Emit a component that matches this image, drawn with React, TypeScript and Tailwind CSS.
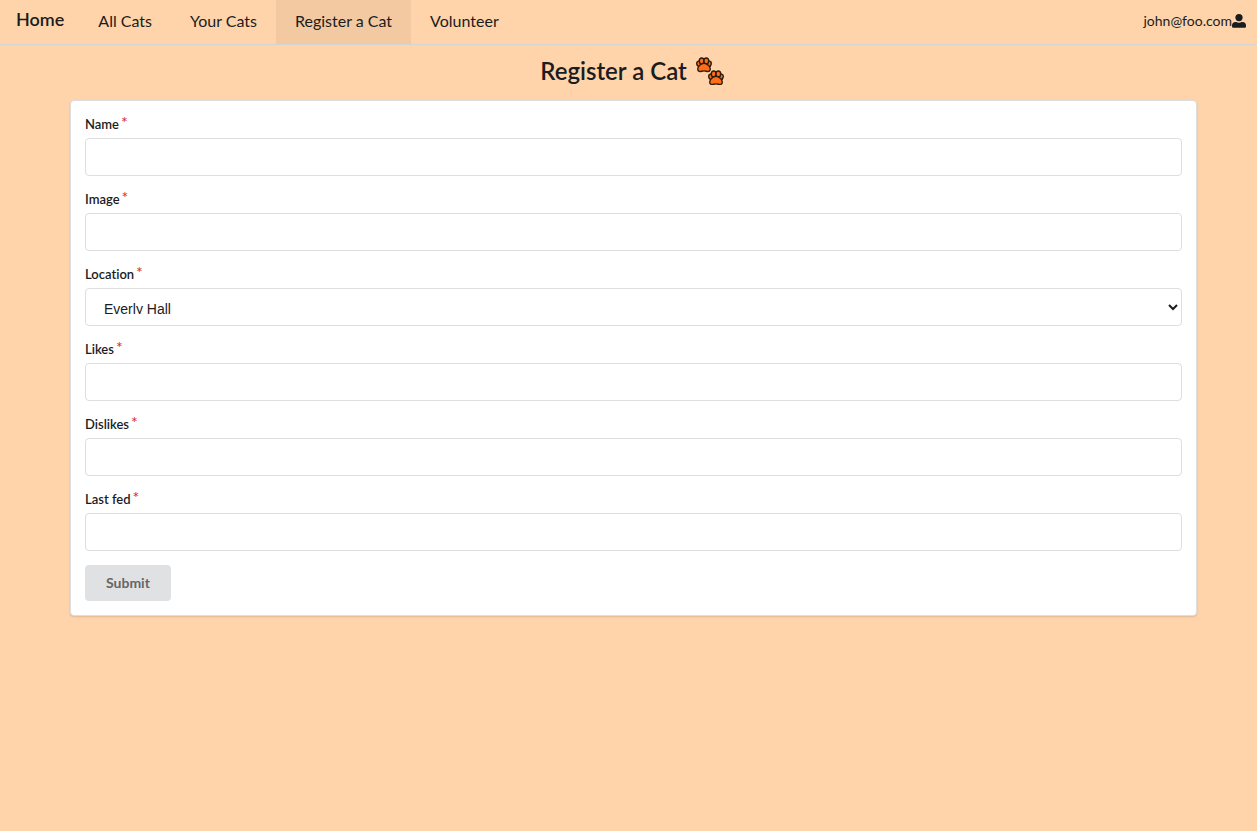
import { useState } from 'react';

const links = ['All Cats', 'Your Cats', 'Register a Cat', 'Volunteer'];

function UserIcon() {
  return (
    <svg viewBox="0 0 14 14" className="size-[14px]" fill="currentColor" aria-hidden="true">
      <circle cx="7" cy="3.6" r="3.6" />
      <path d="M0 12.6v-1A3.6 3.6 0 0 1 3.6 8h.6a5.5 5.5 0 0 0 5.6 0h.6A3.6 3.6 0 0 1 14 11.6v1A1.2 1.2 0 0 1 12.8 13.8H1.2A1.2 1.2 0 0 1 0 12.6Z" />
    </svg>
  );
}

function Paw({ x, y }: { x: number; y: number }) {
  return (
    <g transform={`translate(${x} ${y})`} stroke="#2b1d10" strokeWidth="1.4" fill="#ff6d16" strokeLinejoin="round">
      <ellipse cx="2.9" cy="6.8" rx="2.1" ry="2.8" transform="rotate(-12 2.9 6.8)" />
      <ellipse cx="13.1" cy="6.8" rx="2.1" ry="2.8" transform="rotate(12 13.1 6.8)" />
      <ellipse cx="5.7" cy="4" rx="2.4" ry="3" />
      <ellipse cx="10.3" cy="4" rx="2.4" ry="3" />
      <path d="M8 6.2C5.6 6.2 4.6 7.4 3.4 8.6 1.5 10.6 1.2 13.2 2.7 14.2c1.5.9 3.3-.3 5.300-.3s3.800 1.200 5.300.3c1.500-1 1.200-3.600-.7-5.600C11.400 7.400 10.400 6.200 8 6.200Z" />
    </g>
  );
}

function PawsIcon() {
  return (
    <svg viewBox="0 0 28 28" className="size-7" aria-hidden="true">
      <Paw x={0} y={0} />
      <Paw x={12} y={13} />
    </svg>
  );
}

function Label({ id, children }: { id: string; children: string }) {
  return (
    <label htmlFor={id} className="mb-[5px] block text-[13px] leading-[18px] font-semibold">
      {children}
      <span className="relative -top-px ml-[2px] text-base leading-none font-normal text-[#db2828]">*</span>
    </label>
  );
}

const box = 'block h-[38px] w-full rounded border border-[#dedede] bg-white px-[14px] text-sm outline-none focus:border-[#85b7d9]';

function TextField({ id, label }: { id: string; label: string }) {
  return (
    <div>
      <Label id={id}>{label}</Label>
      <input id={id} type="text" className={box} />
    </div>
  );
}

export default function App() {
  const [hall, setHall] = useState('Everly Hall');
  return (
    <div className="min-h-screen bg-[#ffd4aa] font-['Lato',sans-serif] text-[#1b1c1d] [font-variant-ligatures:none]">
      <nav className="flex h-[45px] items-stretch border-b border-[#d4d4d5] text-base">
        <a href="#home" className="flex items-center pr-[15px] pb-[6px] pl-4 text-lg font-semibold">Home</a>
        {links.map((link) => (
          <a
            key={link}
            href={'#' + link.toLowerCase().replaceAll(' ', '-')}
            aria-current={link === 'Register a Cat' ? 'page' : undefined}
            className="flex items-center px-[19px] pb-[2px] aria-[current=page]:bg-[#f2c9a1]"
          >
            {link}
          </a>
        ))}
        <a href="#account" className="ml-auto flex items-center pr-[11px] pb-[2px] text-sm">
          john@foo.com
          <UserIcon />
        </a>
      </nav>
      <main className="pl-[10px]">
        <div className="mx-auto max-w-[1127px]">
          <h1 className="flex h-[55px] items-center justify-center gap-[9px] pr-[3px] pb-[3px] text-2xl font-semibold">
            Register a Cat
            <PawsIcon />
          </h1>
          <form
            onSubmit={(event) => event.preventDefault()}
            className="flex flex-col gap-[14px] rounded border border-[#dedede] bg-white p-[14px] shadow-[0_1px_2px_rgba(34,36,38,0.15)]"
          >
            <TextField id="name" label="Name" />
            <TextField id="image" label="Image" />
            <div>
              <Label id="location">Location</Label>
              <select
                id="location"
                value={hall}
                onChange={(event) => setHall(event.target.value)}
                className="block h-[38px] w-full rounded border border-[#dedede] bg-white py-[11px] pl-[14px] font-['Liberation_Sans',sans-serif] text-sm outline-none"
              >
                <option>Everly Hall</option>
                <option>Hamilton Library</option>
                <option>Campus Center</option>
              </select>
            </div>
            <TextField id="likes" label="Likes" />
            <TextField id="dislikes" label="Dislikes" />
            <TextField id="last-fed" label="Last fed" />
            <button
              type="submit"
              className="h-9 self-start rounded bg-[#e0e1e2] px-[21px] text-sm font-bold text-[#666666]"
            >
              Submit
            </button>
          </form>
        </div>
      </main>
    </div>
  );
}
